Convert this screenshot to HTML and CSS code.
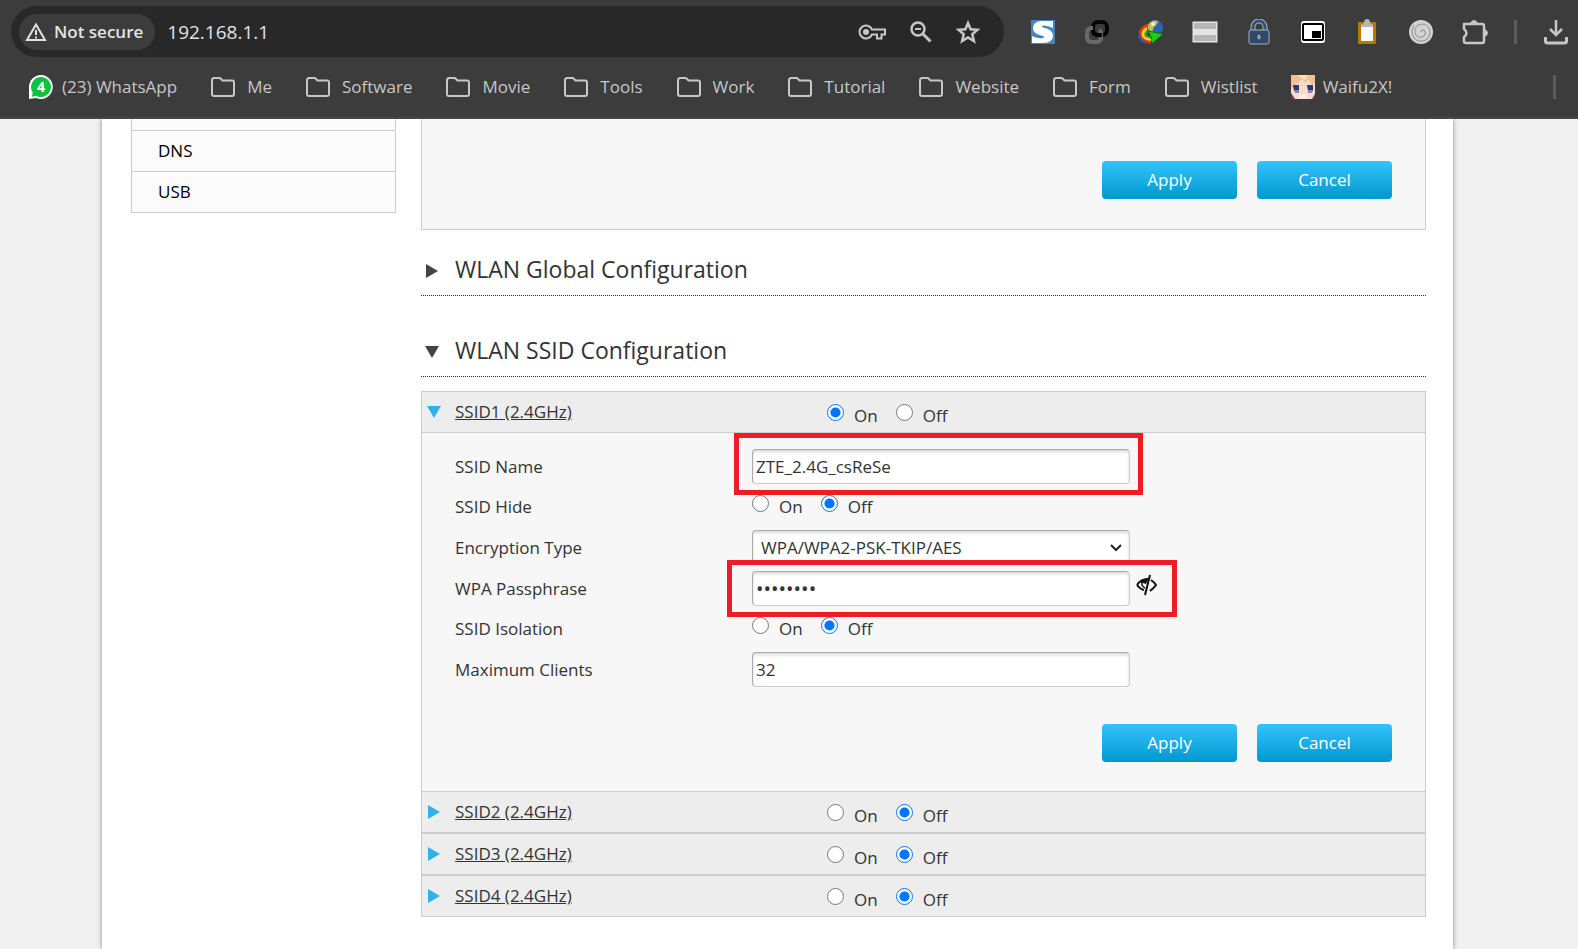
FILE: index.html
```html
<!DOCTYPE html>
<html lang="en">
<head>
    <meta charset="UTF-8">
    <meta name="viewport" content="width=device-width, initial-scale=1.0">
    <title>WLAN Configuration</title>
    <link rel="stylesheet" href="styles.css">
</head>
<body>
    <!-- Icons used more than once -->
    <svg class="sprite" width="0" height="0">
        <symbol id="folder" viewBox="0 0 26 22">
            <path d="M2 4.5v13.500q0 2 2 2h18q2 0 2-2V6.500q0-2-2-2H12.500L10 2H4Q2 2 2 4.500z" fill="none" stroke="#c7c7c7" stroke-width="2" stroke-linejoin="round"/>
        </symbol>
        <symbol id="arrow-right" viewBox="0 0 14 14">
            <path d="M1 0l12 7-12 7z" fill="currentColor"/>
        </symbol>
        <symbol id="arrow-down" viewBox="0 0 14 14">
            <path d="M0 1h14L7 13z" fill="currentColor"/>
        </symbol>
    </svg>

    <header class="browser">
        <div class="toolbar">
            <div class="address-bar">
                <button type="button" class="chip">
                    <svg width="22" height="20" viewBox="0 0 22 20">
                        <path d="M11 2.500L20 18H2z" fill="none" stroke="#e3e3e3" stroke-width="2"/>
                        <path d="M11 8v5M11 14.500v2" stroke="#e3e3e3" stroke-width="2"/>
                    </svg>
                    Not secure
                </button>
                <input type="text" class="url" value="192.168.1.1" aria-label="Address">
                <div class="address-icons">
                    <button type="button" class="icon-btn" aria-label="Passwords">
                        <svg width="28" height="24" viewBox="0 0 28 24" fill="none" stroke="#c7c7c7" stroke-width="2">
                            <path d="M14 9.500A6.500 6.500 0 1 0 14 14.500h5v4h4.500v-4H27v-5z"/>
                            <circle cx="8" cy="12" r="3" fill="#c7c7c7" stroke="none"/>
                        </svg>
                    </button>
                    <button type="button" class="icon-btn" aria-label="Zoom">
                        <svg width="24" height="24" viewBox="0 0 24 24" fill="none" stroke="#c7c7c7" stroke-width="2.500">
                            <circle cx="9" cy="9" r="6.500"/>
                            <path d="M6 9h6" stroke-width="2"/>
                            <path d="M13.500 13.500l8 8" stroke-width="3"/>
                        </svg>
                    </button>
                    <button type="button" class="icon-btn" aria-label="Bookmark this page">
                        <svg width="24" height="24" viewBox="0 0 24 24">
                            <path d="M12 3l2.600 6.200 6.900.6-5.200 4.500 1.600 6.700-5.900-3.600-5.900 3.600 1.600-6.700L2.500 9.800l6.900-.6z" fill="none" stroke="#c7c7c7" stroke-width="2.500"/>
                        </svg>
                    </button>
                </div>
            </div>
            <div class="extensions">
                <button type="button" class="icon-btn" aria-label="S extension">
                    <svg width="24" height="24" viewBox="0 0 24 24">
                        <rect width="24" height="24" fill="#3f87c5"/>
                        <path d="M22 1v7q-6-3-10-2.500-2 1 0 2 10 2 10 8Q22 23 12 23H1v-7q6 3 11 2 2-1 0-2Q2 14 2 8.500 2 1 11 1z" fill="#fff"/>
                    </svg>
                </button>
                <button type="button" class="icon-btn" aria-label="Link extension">
                    <svg width="24" height="26" viewBox="0 0 24 26" fill="none" stroke-width="4">
                        <rect x="8" y="3" width="14" height="13" rx="5" stroke="#050505"/>
                        <path d="M8 9H7q-5 0-5 5v4q0 5 5 5h4q5 0 5-5v-3q0-3-2-4" stroke="#6a6a6c"/>
                        <path d="M8 11q0 5 5 5h4" stroke="#050505"/>
                    </svg>
                </button>
                <button type="button" class="icon-btn" aria-label="Download manager">
                    <svg width="26" height="26" viewBox="0 0 26 26" fill="none">
                        <path d="M10 6Q2 9 2 16q1 7 11 7" stroke="#d9381c" stroke-width="3"/>
                        <path d="M10 9q-5 2-5 7 2 5 9 4" stroke="#f5d21c" stroke-width="3"/>
                        <path d="M10 12q-3 2-2 5l6 2" stroke="#2fa52b" stroke-width="2"/>
                        <path d="M1 15q0 7 7 9" stroke="#2b4fc4" stroke-width="2"/>
                        <circle cx="17" cy="9" r="8" fill="#2d62b4"/>
                        <path d="M10 6q4-6 10-4 0 3-3 5t-2 7q-6-2-5-8z" fill="#c3c052"/>
                        <circle cx="15" cy="5" r="2" fill="#eef0b8"/>
                        <path d="M10 12l15 3-11 10q0-5-1-7z" fill="#1fc91b" stroke="#0c6d0c"/>
                    </svg>
                </button>
                <button type="button" class="icon-btn" aria-label="Layout extension">
                    <svg width="26" height="22" viewBox="0 0 26 22">
                        <rect x="1" y="1" width="24" height="20" fill="#e3e3e3" stroke="#e3e3e3"/>
                        <path d="M2 5h22M2 17h22" stroke="#b6b6b6" stroke-width="6"/>
                    </svg>
                </button>
                <button type="button" class="icon-btn" aria-label="Lock extension">
                    <svg width="22" height="26" viewBox="0 0 22 26" fill="none">
                        <path d="M5 12V8a6 6 0 0 1 12 0v4" stroke="#a4b3c4" stroke-width="5"/>
                        <path d="M5 12V8a6 6 0 0 1 12 0v4" stroke="#34506f" stroke-width="3"/>
                        <rect x="1" y="11" width="20" height="14" rx="2" fill="#304968" stroke="#a4b3c4"/>
                        <ellipse cx="11" cy="18" rx="1" ry="2" stroke="#c9d2dc"/>
                    </svg>
                </button>
                <button type="button" class="icon-btn" aria-label="Picture in picture">
                    <svg width="26" height="24" viewBox="0 0 26 24">
                        <rect x="1" y="1" width="24" height="22" rx="3" fill="#fff"/>
                        <rect x="3" y="4" width="20" height="16" rx="1" fill="none" stroke="#000" stroke-width="2"/>
                        <rect x="12" y="11" width="9" height="7" fill="#000"/>
                    </svg>
                </button>
                <button type="button" class="icon-btn" aria-label="Clipboard">
                    <svg width="20" height="26" viewBox="0 0 20 26">
                        <rect x="1" y="3" width="18" height="22" rx="1" fill="#b47a05"/>
                        <path d="M4 6h12v16H4z" fill="#fafafa"/>
                        <path d="M4 8q0-3 3-4 0-4 3-4t3 4q3 1 3 4z" fill="#b5b5b5"/>
                    </svg>
                </button>
                <button type="button" class="icon-btn" aria-label="Spiral extension">
                    <svg width="26" height="26" viewBox="0 0 26 26">
                        <circle cx="13" cy="13" r="12" fill="#d2d2d2"/>
                        <path d="M13 13q0-3 3-2 3 3 0 6-5 3-8-1-3-6 2-10 7-3 11 3 3 7-3 12-7 3-12-2-4-7 0-13" fill="none" stroke="#8e8e8e"/>
                    </svg>
                </button>
                <button type="button" class="icon-btn" aria-label="Extensions">
                    <svg width="26" height="28" viewBox="0 0 26 28">
                        <path d="M2 6h18q2 0 2 2v15q0 2-2 2H4q-2 0-2-2v-4q5-4 0-8z" fill="none" stroke="#c7c7c7" stroke-width="2.500" stroke-linejoin="round"/>
                        <path d="M8 5q4-6 8 0zM23 11q6 4 0 8z" fill="#c7c7c7"/>
                    </svg>
                </button>
            </div>
            <span class="divider"></span>
            <button type="button" class="icon-btn" aria-label="Downloads">
                <svg width="26" height="26" viewBox="0 0 26 26" fill="none" stroke="#c7c7c7" stroke-width="3">
                    <path d="M13 1v15M7 10l6 6 6-6" stroke-width="2.500"/>
                    <path d="M2.500 18v4q0 2 2 2h17q2 0 2-2v-4"/>
                </svg>
            </button>
        </div>

        <nav class="bookmarks">
            <a href="#" class="site">
                <svg width="26" height="26" viewBox="0 0 26 26">
                    <path d="M13 1a12 12 0 1 1-5 23L1 25V13A12 12 0 0 1 13 1z" fill="#fff"/>
                    <path d="M13 3a10 10 0 1 1-5 18.700l-4 1 .6-4.500A10 10 0 0 1 13 3z" fill="#0fc143"/>
                    <text x="13" y="18" text-anchor="middle" class="badge-count">4</text>
                </svg>
                (23) WhatsApp
            </a>
            <a href="#"><svg width="26" height="22"><use href="#folder"/></svg>Me</a>
            <a href="#"><svg width="26" height="22"><use href="#folder"/></svg>Software</a>
            <a href="#"><svg width="26" height="22"><use href="#folder"/></svg>Movie</a>
            <a href="#"><svg width="26" height="22"><use href="#folder"/></svg>Tools</a>
            <a href="#"><svg width="26" height="22"><use href="#folder"/></svg>Work</a>
            <a href="#"><svg width="26" height="22"><use href="#folder"/></svg>Tutorial</a>
            <a href="#"><svg width="26" height="22"><use href="#folder"/></svg>Website</a>
            <a href="#"><svg width="26" height="22"><use href="#folder"/></svg>Form</a>
            <a href="#"><svg width="26" height="22"><use href="#folder"/></svg>Wistlist</a>
            <a href="#" class="site">
                <svg width="24" height="24" viewBox="0 0 24 24">
                    <rect width="24" height="24" fill="#f8dccb"/>
                    <path d="M0 0h24v8l-3 2-4-6-2 4-4-4-5 5-3 1-3 5z" fill="#f0c193"/>
                    <path d="M6 0l8 5 3-5z" fill="#f9e2bb"/>
                    <path d="M2 10h6v6H3zM16 10h6v6h-5z" fill="#34346f"/>
                    <path d="M3 15h5v3H4zM17 15h5l-1 3h-4z" fill="#7d86c8"/>
                    <path d="M0 18l4 6H0zM24 19l-3 5h3z" fill="#7a3434"/>
                    <path d="M8 19h8v5H8z" fill="#fbeae0"/>
                </svg>
                Waifu2X!
            </a>
            <span class="divider"></span>
        </nav>
    </header>

    <div class="page">
        <nav class="side-menu">
            <div class="side-item side-cut"></div>
            <a href="#" class="side-item">DNS</a>
            <a href="#" class="side-item">USB</a>
        </nav>

        <main class="content">
            <div class="top-panel">
                <div class="actions">
                    <button type="button" class="btn">Apply</button>
                    <button type="button" class="btn">Cancel</button>
                </div>
            </div>

            <h2 class="section-title"><svg width="14" height="14"><use href="#arrow-right"/></svg>WLAN Global Configuration</h2>
            <h2 class="section-title"><svg width="14" height="14"><use href="#arrow-down"/></svg>WLAN SSID Configuration</h2>

            <form class="ssid-list">
                <div class="ssid-head">
                    <svg width="14" height="14"><use href="#arrow-down"/></svg>
                    <a href="#">SSID1 (2.4GHz)</a>
                    <div class="radios">
                        <label><input type="radio" name="ssid1" checked>On</label>
                        <label><input type="radio" name="ssid1">Off</label>
                    </div>
                </div>

                <div class="ssid-body">
                    <div class="row">
                        <label for="ssid-name">SSID Name</label>
                        <div class="field">
                            <input type="text" id="ssid-name" class="box" value="ZTE_2.4G_csReSe">
                            <span class="mark mark-name"></span>
                        </div>
                    </div>
                    <div class="row row-radio">
                        <span>SSID Hide</span>
                        <div class="radios">
                            <label><input type="radio" name="hide">On</label>
                            <label><input type="radio" name="hide" checked>Off</label>
                        </div>
                    </div>
                    <div class="row">
                        <label for="encryption">Encryption Type</label>
                        <div class="field">
                            <select id="encryption" class="box">
                                <option>WPA/WPA2-PSK-TKIP/AES</option>
                            </select>
                            <svg class="chevron" width="14" height="8" viewBox="0 0 14 8"><path d="M2 1l5 5 5-5" fill="none" stroke="#222" stroke-width="2"/></svg>
                        </div>
                    </div>
                    <div class="row">
                        <label for="passphrase">WPA Passphrase</label>
                        <div class="field">
                            <input type="password" id="passphrase" class="box" value="password">
                            <button type="button" class="icon-btn eye" aria-label="Show passphrase">
                                <svg width="22" height="22" viewBox="0 0 22 22" fill="none" stroke="#111" stroke-width="2">
                                    <path d="M2 11q4-6 11-6M2 11q3 4 7 5"/>
                                    <path d="M5 8q4-4 9-4l-3 6-3-1z" fill="#111" stroke="none"/>
                                    <path d="M7 8q-1 4 3 6" stroke-width="1.500"/>
                                    <path d="M15 1L10 21"/>
                                    <path d="M16 6q3 2 5 5-2 3-6 6"/>
                                </svg>
                            </button>
                            <span class="mark mark-pass"></span>
                        </div>
                    </div>
                    <div class="row row-radio">
                        <span>SSID Isolation</span>
                        <div class="radios">
                            <label><input type="radio" name="isolation">On</label>
                            <label><input type="radio" name="isolation" checked>Off</label>
                        </div>
                    </div>
                    <div class="row">
                        <label for="max-clients">Maximum Clients</label>
                        <div class="field">
                            <input type="text" id="max-clients" class="box" value="32">
                        </div>
                    </div>
                    <div class="actions">
                        <button type="button" class="btn">Apply</button>
                        <button type="button" class="btn">Cancel</button>
                    </div>
                </div>

                <div class="ssid-head">
                    <svg width="14" height="14"><use href="#arrow-right"/></svg>
                    <a href="#">SSID2 (2.4GHz)</a>
                    <div class="radios">
                        <label><input type="radio" name="ssid2">On</label>
                        <label><input type="radio" name="ssid2" checked>Off</label>
                    </div>
                </div>
                <div class="ssid-head">
                    <svg width="14" height="14"><use href="#arrow-right"/></svg>
                    <a href="#">SSID3 (2.4GHz)</a>
                    <div class="radios">
                        <label><input type="radio" name="ssid3">On</label>
                        <label><input type="radio" name="ssid3" checked>Off</label>
                    </div>
                </div>
                <div class="ssid-head">
                    <svg width="14" height="14"><use href="#arrow-right"/></svg>
                    <a href="#">SSID4 (2.4GHz)</a>
                    <div class="radios">
                        <label><input type="radio" name="ssid4">On</label>
                        <label><input type="radio" name="ssid4" checked>Off</label>
                    </div>
                </div>
            </form>
        </main>
    </div>
</body>
</html>
```
FILE: styles.css
```css
* {
    box-sizing: border-box;
}

body {
    margin: 0;
    min-height: 100vh;
    display: flex;
    flex-direction: column;
    font-family: 'Segoe UI', 'Open Sans', sans-serif;
    font-size: 17px;
    line-height: 24px;
    color: #333;
    background-color: #f1f1f1;
}

button,
input,
select {
    font: inherit;
    color: inherit;
}

svg {
    display: block;
    flex-shrink: 0;
}

.sprite {
    position: absolute;
}

/* Browser bar */
.browser {
    height: 119px;
    background-color: #3c3c3c;
    border-bottom: 2px solid #474747;
}

.toolbar {
    display: flex;
    align-items: center;
    padding: 6px 9px 0 11px;
}

.address-bar {
    flex: 1;
    display: flex;
    align-items: center;
    height: 51px;
    padding: 0 24px 0 8px;
    border-radius: 26px;
    background-color: #282828;
}

.chip {
    display: flex;
    align-items: center;
    gap: 7px;
    height: 36px;
    padding: 0 12px 0 6px;
    border: none;
    border-radius: 18px;
    background-color: #3c3c3c;
    color: #e3e3e3;
    font-weight: 600;
}

.url {
    flex: 1;
    min-width: 0;
    margin-left: 12px;
    padding: 0;
    border: none;
    background: none;
    color: #e3e3e3;
    font-size: 19px;
}

.address-icons {
    display: flex;
    align-items: center;
    gap: 23px;
}

.icon-btn {
    display: flex;
    justify-content: center;
    align-items: center;
    padding: 0;
    border: none;
    background: none;
}

.extensions {
    display: flex;
    margin-left: 26px;
}

.extensions .icon-btn {
    width: 26px;
    margin-right: 28px;
}

.divider {
    width: 3px;
    height: 24px;
    background-color: #5c5c5c;
}

.extensions + .divider {
    margin: 0 26px 0 -2px;
}

.bookmarks {
    display: flex;
    align-items: center;
    height: 60px;
    padding: 0 22px 0 28px;
}

.bookmarks a {
    display: flex;
    align-items: center;
    gap: 11px;
    margin-right: 33px;
    color: #c7c7c7;
    text-decoration: none;
    white-space: nowrap;
}

.bookmarks .site {
    gap: 8px;
}

.bookmarks .divider {
    margin-left: auto;
}

.badge-count {
    font-size: 14px;
    font-weight: 700;
    fill: #fff;
}

/* Router page */
.page {
    flex: 1;
    display: flex;
    align-items: flex-start;
    gap: 25px;
    margin: 0 125px 0 102px;
    padding: 0 27px 0 29px;
    background-color: #fff;
    box-shadow: 0 0 5px #888;
    clip-path: inset(0 -10px);
}

.side-menu {
    width: 265px;
    border: 1px solid #ccc;
    border-top: none;
    background-color: #fbfbfb;
}

.side-item {
    display: block;
    height: 41px;
    padding: 8px 26px;
    border-top: 1px solid #ccc;
    color: #000;
    text-decoration: none;
}

.side-cut {
    height: 11px;
    padding: 0;
    border-top: none;
}

.content {
    flex: 1;
    min-width: 0;
}

.top-panel {
    padding: 42px 33px 30px;
    border: 1px solid #ccc;
    border-top: none;
    background-color: #f7f7f7;
}

.actions {
    display: flex;
    justify-content: flex-end;
    gap: 20px;
}

.btn {
    width: 135px;
    height: 38px;
    border: none;
    border-radius: 4px;
    background: linear-gradient(#35c3fb, #0098ce);
    color: #fff;
}

.section-title {
    display: flex;
    align-items: center;
    gap: 16px;
    margin: 0;
    padding: 23px 0 10px 4px;
    border-bottom: 1px dotted #333;
    font-size: 23px;
    font-weight: 400;
    line-height: 32px;
    color: #333;
}

.section-title + .section-title {
    padding-top: 38px;
}

.section-title svg {
    margin-top: 4px;
    color: #444;
}

.ssid-list {
    margin-top: 14px;
    border: 1px solid #ccc;
    border-width: 0 1px;
}

.ssid-head {
    display: grid;
    grid-template-columns: 28px 372px 1fr;
    align-items: center;
    height: 42px;
    padding-left: 5px;
    border: 1px solid #ccc;
    border-width: 1px 0;
    background-color: #ededed;
}

.ssid-head svg {
    color: #31b2e6;
}

.ssid-head a {
    color: #333;
}

.radios {
    display: flex;
    gap: 18px;
}

.radios label {
    display: flex;
    align-items: flex-start;
    gap: 10px;
}

.radios input {
    width: 17px;
    height: 17px;
    margin: 0;
    accent-color: #0075ff;
}

.ssid-head .radios {
    padding-top: 8px;
}

.ssid-body {
    padding: 16px 33px 29px;
    background-color: #f7f7f7;
}

.row {
    display: grid;
    grid-template-columns: 297px 1fr;
    align-items: center;
    height: 35px;
    margin-bottom: 6px;
}

.row-radio {
    height: 34px;
}

.field {
    position: relative;
    display: flex;
    align-items: center;
    gap: 5px;
}

.box {
    width: 378px;
    height: 35px;
    padding: 0 3px;
    border: 1px solid #ccc;
    border-color: #aaa #ccc #ccc #aaa;
    border-radius: 4px;
    background-color: #fff;
    box-shadow: inset 0 2px 3px rgba(0, 0, 0, 0.15);
}

input[type="password"] {
    font-size: 20px;
}

select.box {
    appearance: none;
    padding-left: 8px;
}

.chevron {
    position: absolute;
    left: 357px;
    top: 14px;
    pointer-events: none;
}

.eye {
    margin-bottom: 8px;
}

.ssid-body .actions {
    margin-top: 37px;
}

/* Red highlights drawn over the fields */
.mark {
    position: absolute;
    border: 5px solid #ee1c25;
    pointer-events: none;
}

.mark-name {
    left: -18px;
    top: -16px;
    width: 409px;
    height: 62px;
}

.mark-pass {
    left: -25px;
    top: -11px;
    width: 450px;
    height: 57px;
}
```
